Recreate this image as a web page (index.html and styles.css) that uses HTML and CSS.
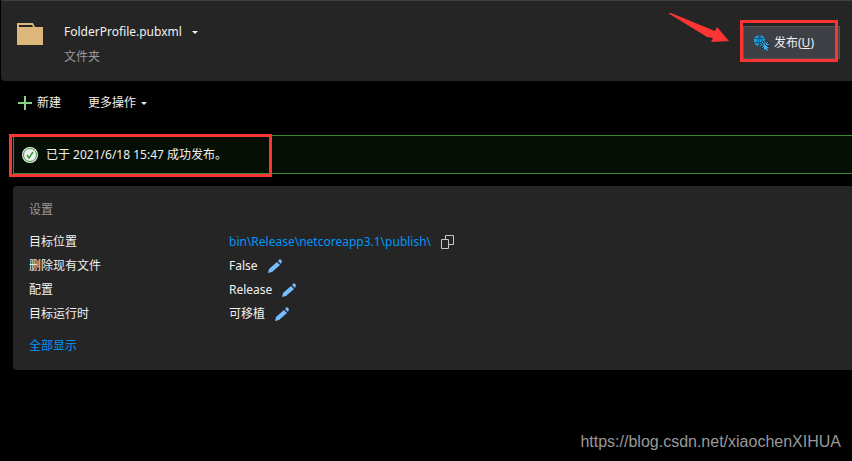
FILE: index.html
```html
<!DOCTYPE html>
<html lang="zh-CN">
<head>
    <meta charset="UTF-8">
    <meta name="viewport" content="width=device-width, initial-scale=1.0">
    <title>发布</title>
    <link rel="stylesheet" href="styles.css">
</head>
<body>
    <!-- Profile header -->
    <header class="profile-header">
        <svg class="folder-icon" width="26" height="22" viewBox="0 0 26 22">
            <path d="M0 0h16l2 4h8v18H0z" fill="#dcb67a"/>
            <path d="M2 2h13l1 2H2z" fill="#252526"/>
        </svg>
        <div class="profile-info">
            <button type="button" class="profile-name">FolderProfile.pubxml <span class="caret"></span></button>
            <div class="profile-type">文件夹</div>
        </div>
        <svg class="arrow" width="62" height="30" viewBox="0 0 62 30">
            <path d="M0 0L3 0 47 18 49 14 61 28 43 29 45 25 39 24z" fill="#fb3534"/>
        </svg>
        <div class="publish">
            <button type="button" class="publish-btn">
                <svg width="16" height="16" viewBox="0 0 16 16">
                    <circle cx="5.500" cy="5.500" r="5.500" fill="#1ba1e2"/>
                    <path d="M1 3.500h9M0 7.500h11M5.500 0v11M5.500 0Q1 5.500 5.500 11M5.500 0Q10 5.500 5.500 11" stroke="#24475c" stroke-width=".8" fill="none"/>
                    <circle cx="11.500" cy="10" r="4.500" fill="#252f38"/>
                    <path d="M11 6v3M7 10h3M8 7l2 2M14 7l-2 2M8 13l2-2M12 9.500h3" stroke="#3fb4f0" fill="none"/>
                    <path d="M10 9l5 4h-2l1 2-1 1-1-2-2 1z" fill="#3fb4f0"/>
                </svg>
                <span>发布(<u>U</u>)</span>
            </button>
            <span class="mark mark-publish"></span>
        </div>
    </header>

    <!-- Toolbar -->
    <nav class="toolbar">
        <button type="button" class="new-btn">
            <svg width="14" height="14" viewBox="0 0 14 14"><path d="M7 0v14M0 7h14" stroke="#89d185" stroke-width="2"/></svg>
            新建
        </button>
        <button type="button">更多操作 <span class="caret"></span></button>
    </nav>

    <!-- Publish result -->
    <div class="status" role="status">
        <svg width="16" height="16" viewBox="0 0 16 16">
            <circle cx="8" cy="8" r="8" fill="#f0f0f0"/>
            <circle cx="8" cy="8" r="6.500" fill="none" stroke="#339933"/>
            <path d="M5 8l2 3 4-6" fill="none" stroke="#339933" stroke-width="1.500"/>
        </svg>
        <span>已于 2021/6/18 15:47 成功发布。</span>
        <span class="mark mark-status"></span>
    </div>

    <!-- Settings -->
    <section class="settings">
        <h2>设置</h2>
        <dl>
            <dt>目标位置</dt>
            <dd>
                <a href="#">bin\Release\netcoreapp3.1\publish\</a>
                <button type="button" aria-label="复制">
                    <svg width="14" height="14" viewBox="0 0 14 14"><path d="M4.500 4V.5h8v9H8M.5 4.500h7v9h-7z" fill="none" stroke="#c8c8c8"/></svg>
                </button>
            </dd>
            <dt>删除现有文件</dt>
            <dd>
                False
                <button type="button" aria-label="编辑">
                    <svg width="14" height="14" viewBox="0 0 14 14"><path d="M0 14l1-4 8-7 3 3-8 7zM10 2l2-2 2 2-1 3z" fill="#75beff"/></svg>
                </button>
            </dd>
            <dt>配置</dt>
            <dd>
                Release
                <button type="button" aria-label="编辑">
                    <svg width="14" height="14" viewBox="0 0 14 14"><path d="M0 14l1-4 8-7 3 3-8 7zM10 2l2-2 2 2-1 3z" fill="#75beff"/></svg>
                </button>
            </dd>
            <dt>目标运行时</dt>
            <dd>
                可移植
                <button type="button" aria-label="编辑">
                    <svg width="14" height="14" viewBox="0 0 14 14"><path d="M0 14l1-4 8-7 3 3-8 7zM10 2l2-2 2 2-1 3z" fill="#75beff"/></svg>
                </button>
            </dd>
        </dl>
        <a href="#">全部显示</a>
    </section>

    <footer class="watermark">https://blog.csdn.net/xiaochenXIHUA</footer>
</body>
</html>
```

FILE: styles.css
```css
* {
    box-sizing: border-box;
}
body {
    display: flex;
    flex-direction: column;
    min-height: 100vh;
    margin: 0;
    background-color: #000;
    color: #f1f1f1;
    font-family: "Noto Sans", "Noto Sans CJK SC", sans-serif;
    font-size: 12px;
    line-height: 24px;
}
button {
    display: flex;
    align-items: center;
    padding: 0;
    border: none;
    background: none;
    color: inherit;
    font: inherit;
    cursor: pointer;
}
svg {
    display: block;
    flex-shrink: 0;
}
a {
    color: #0097fb;
    text-decoration: none;
}
.caret {
    margin-left: 10px;
    border: 3px solid transparent;
    border-top-color: #f1f1f1;
    border-bottom: none;
}
.profile-header {
    display: flex;
    align-items: flex-start;
    height: 81px;
    margin-left: 1px;
    padding: 19px 12px 0 16px;
    border-top: 1px solid #3f3f46;
    border-bottom-left-radius: 4px;
    background-color: #252526;
}
.folder-icon {
    margin-top: 3px;
}
.profile-info {
    flex: 1;
    margin-left: 21px;
}
.profile-type {
    margin-top: 1px;
    color: #999;
}
.arrow {
    margin: -7px 10px 0 0;
}
/* red annotation frame */
.mark {
    position: absolute;
    inset: 0;
    border: 3px solid #fb3534;
    pointer-events: none;
}
.publish {
    position: relative;
    padding: 6px 0 3px 3px;
}
.mark-publish {
    right: 2px;
}
.publish-btn {
    width: 97px;
    height: 33px;
    gap: 4px;
    padding-left: 10px;
    border: 1px solid #555;
    background-color: #3f3f46;
}
.toolbar {
    display: flex;
    gap: 27px;
    padding: 10px 18px;
}
.toolbar .caret {
    margin-left: 5px;
}
.new-btn {
    gap: 5px;
}
.status {
    position: relative;
    display: flex;
    align-items: center;
    gap: 8px;
    height: 39px;
    margin: 10px 0 12px 13px;
    padding-left: 8px;
    border: 1px solid #388a34;
    border-right: none;
    background-color: #050f05;
}
.mark-status {
    inset: -2px auto -4px -5px;
    width: 263px;
}
.settings {
    margin-left: 13px;
    padding: 12px 16px;
    border-radius: 4px 0 0 4px;
    background-color: #252526;
}
.settings h2 {
    margin: 0;
    color: #999;
    font-size: 12px;
    font-weight: normal;
}
.settings dl {
    display: grid;
    grid-template-columns: 200px 1fr;
    margin: 8px 0;
}
.settings dd {
    display: flex;
    align-items: center;
    gap: 10px;
    margin: 0;
}
.watermark {
    margin-top: auto;
    padding: 0 11px 7px;
    color: #999;
    font-family: "Liberation Sans", Arial, sans-serif;
    font-size: 16px;
    text-align: right;
}
```
